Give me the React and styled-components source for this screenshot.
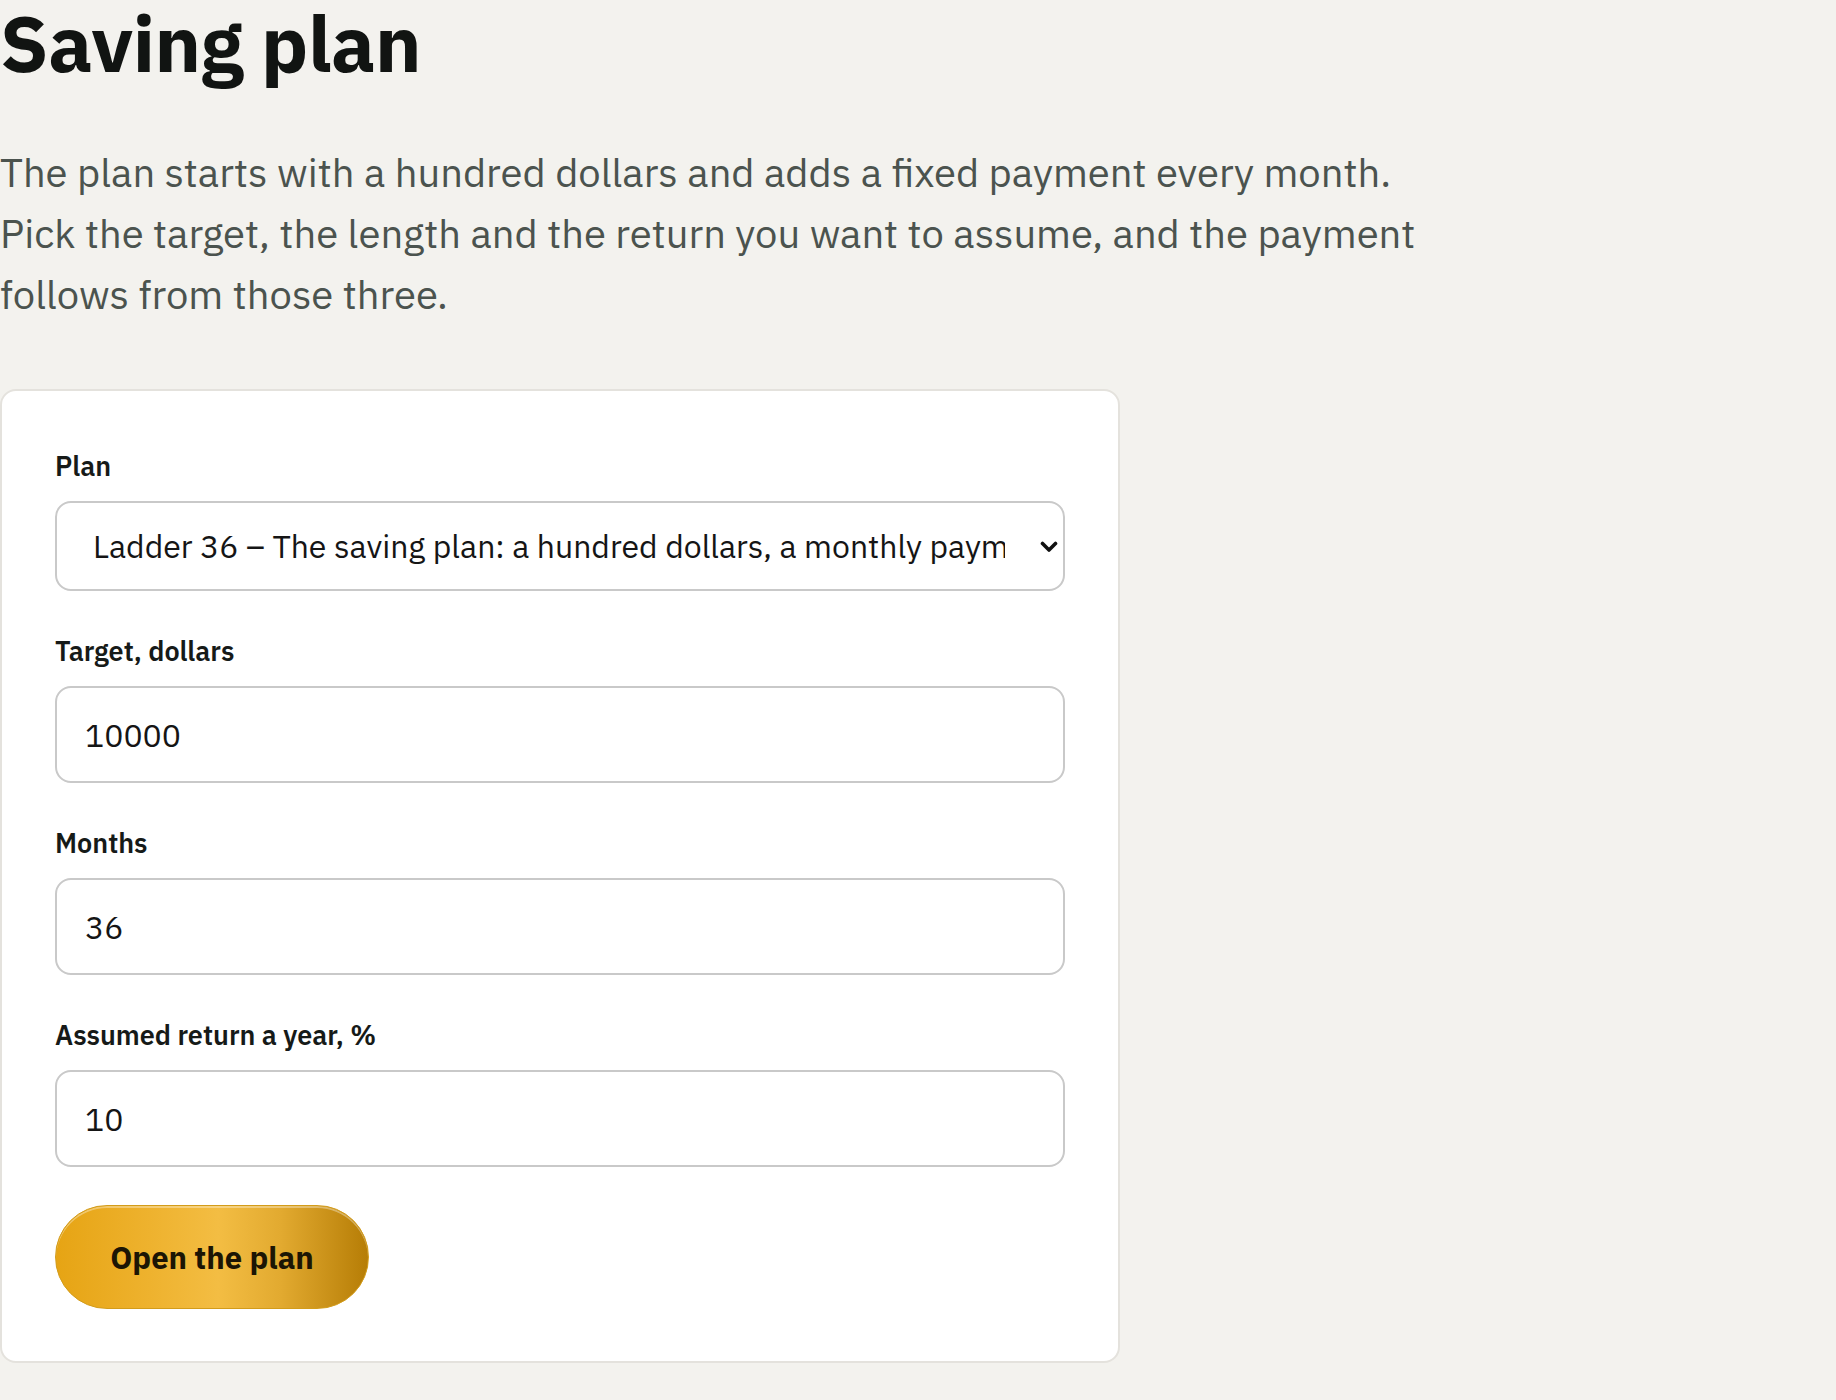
import React, { useState } from "react";
import styled, { createGlobalStyle } from "styled-components";

const GlobalStyle = createGlobalStyle`
  html, body {
    margin: 0;
    padding: 0;
    background: #f3f2ee;
  }
  body {
    font-family: "IBM Plex Sans", Roboto, "Liberation Sans", sans-serif;
    color: #121513;
  }
  * {
    box-sizing: border-box;
  }
`;

const Page = styled.main`
  width: 1836px;
`;

const Title = styled.h1`
  margin: 0;
  font-size: 78px;
  line-height: 86px;
  font-weight: 700;
  letter-spacing: -0.5px;
  color: #111412;
`;

const Intro = styled.p`
  margin: 56px 0 0;
  max-width: 1440px;
  font-size: 40px;
  line-height: 61px;
  color: #4b534e;
`;

const Card = styled.form`
  margin-top: 64px;
  width: 1120px;
  padding: 60px 53px 52px;
  background: #fff;
  border: 2px solid #e4e2dd;
  border-radius: 16px;
  display: flex;
  flex-direction: column;
  gap: 45px;
`;

const Field = styled.div`
  display: flex;
  flex-direction: column;
  gap: 20px;
`;

const Label = styled.label`
  font-size: 27px;
  line-height: 30px;
  font-weight: 600;
  color: #161a18;
`;

const SelectWrap = styled.div`
  position: relative;
`;

const Select = styled.select`
  appearance: none;
  width: 100%;
  height: 90px;
  padding: 0 58px 0 36px;
  font: inherit;
  font-size: 32px;
  color: #151515;
  background: #fff;
  border: 2px solid #c9c9c9;
  border-radius: 16px;
  outline: none;
`;

const Chevron = styled.svg`
  position: absolute;
  top: 50%;
  right: 7px;
  width: 18px;
  height: 12px;
  margin-top: -5px;
  pointer-events: none;
`;

const Input = styled.input`
  width: 100%;
  height: 97px;
  padding: 0 28px;
  font: inherit;
  font-size: 32px;
  color: #151515;
  background: #fff;
  border: 2px solid #c9c9c9;
  border-radius: 16px;
  outline: none;
`;

const Button = styled.button`
  align-self: flex-start;
  margin-top: -7px;
  width: 314px;
  height: 104px;
  border: 1px solid #d39c1a;
  border-radius: 52px;
  font: inherit;
  font-size: 31px;
  font-weight: 700;
  color: #1c1504;
  cursor: pointer;
  background: linear-gradient(
    90deg,
    #e6a414 0%,
    #eeb22e 30%,
    #f3bd43 52%,
    #e2aa30 72%,
    #b67d06 100%
  );
  box-shadow: inset 0 2px 0 rgba(255, 255, 255, 0.35);
`;

const plans = [
  "Ladder 36 – The saving plan: a hundred dollars, a monthly payment and a return",
  "Ladder 24 – A shorter plan with a higher payment",
  "Ladder 60 – A longer plan with a lower payment",
];

export default function App() {
  const [plan, setPlan] = useState(plans[0]);
  const [target, setTarget] = useState("10000");
  const [months, setMonths] = useState("36");
  const [rate, setRate] = useState("10");

  return (
    <Page>
      <GlobalStyle />
      <Title>Saving plan</Title>
      <Intro>
        The plan starts with a hundred dollars and adds a fixed payment every
        month. Pick the target, the length and the return you want to assume,
        and the payment follows from those three.
      </Intro>
      <Card onSubmit={(e) => e.preventDefault()}>
        <Field>
          <Label htmlFor="plan">Plan</Label>
          <SelectWrap>
            <Select id="plan" value={plan} onChange={(e) => setPlan(e.target.value)}>
              {plans.map((p) => (
                <option key={p}>{p}</option>
              ))}
            </Select>
            <Chevron viewBox="0 0 18 12">
              <path
                d="M2.5 2.5 L9 9 L15.5 2.5"
                fill="none"
                stroke="#111"
                strokeWidth="3.6"
                strokeLinecap="round"
                strokeLinejoin="round"
              />
            </Chevron>
          </SelectWrap>
        </Field>
        <Field>
          <Label htmlFor="target">Target, dollars</Label>
          <Input id="target" value={target} onChange={(e) => setTarget(e.target.value)} />
        </Field>
        <Field>
          <Label htmlFor="months">Months</Label>
          <Input id="months" value={months} onChange={(e) => setMonths(e.target.value)} />
        </Field>
        <Field>
          <Label htmlFor="rate">Assumed return a year, %</Label>
          <Input id="rate" value={rate} onChange={(e) => setRate(e.target.value)} />
        </Field>
        <Button type="submit">Open the plan</Button>
      </Card>
    </Page>
  );
}
